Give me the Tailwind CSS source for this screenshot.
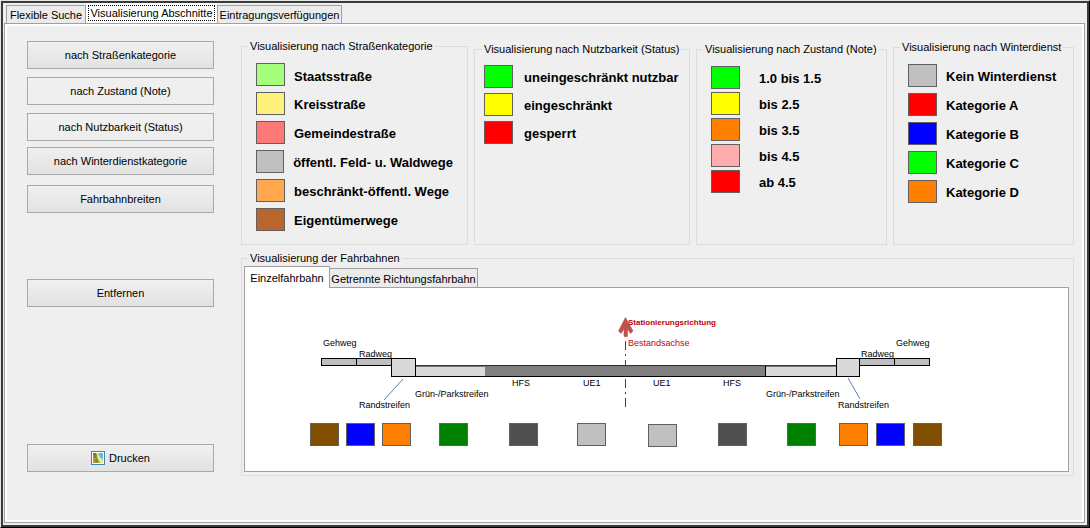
<!DOCTYPE html>
<html lang="de">
<head>
<meta charset="utf-8">
<title>Visualisierung Abschnitte</title>
<script src="https://cdn.jsdelivr.net/npm/@tailwindcss/browser@4"></script>
</head>
<body class="bg-[#d4d4d4] font-['Liberation_Sans',Arial,sans-serif] text-[11px] leading-4 text-black">
<div class="flex min-h-screen flex-col border-t border-l border-r border-b border-t-[#e4e4e4] border-l-[#e4e4e4] border-r-black border-b-black">
<div class="flex flex-1 flex-col border-2 border-[#3a3c3a] bg-[#efefef] pr-0.5 pb-0.5 pl-px">

  <div role="tablist" class="flex items-end">
    <button role="tab" class="mt-0.5 ml-0.5 h-[18px] w-20 border border-b-0 border-[#a0a0a0] bg-[#ebebeb] whitespace-nowrap">Flexible Suche</button>
    <button role="tab" aria-selected="true" class="h-5 w-[131px] bg-white p-0.5 whitespace-nowrap"><span class="block border border-dotted border-black leading-[14px]">Visualisierung Abschnitte</span></button>
    <button role="tab" class="mt-0.5 h-[18px] w-[125px] border border-b-0 border-[#a0a0a0] bg-[#ebebeb] whitespace-nowrap">Eintragungsverfügungen</button>
  </div>

  <main role="tabpanel" class="flex flex-1 gap-[27px] border border-[#a0a0a0] bg-[#efefef] pt-3.5 pr-2.5 pl-[22px] ring-2 ring-white ring-inset">
    <nav class="flex w-[187px] shrink-0 flex-col pt-[3px]" aria-label="Visualisierung">
      <button class="h-7 border border-[#a8a8a8] bg-linear-to-b from-[#f0f0f0] to-[#e2e2e2]">nach Straßenkategorie</button>
      <button class="mt-2 h-7 border border-[#a8a8a8] bg-linear-to-b from-[#f0f0f0] to-[#eeeeee]">nach Zustand (Note)</button>
      <button class="mt-2 h-7 border border-[#a8a8a8] bg-linear-to-b from-[#f0f0f0] to-[#eeeeee]">nach Nutzbarkeit (Status)</button>
      <button class="mt-1.5 h-7 border border-[#a8a8a8] bg-linear-to-b from-[#f0f0f0] to-[#e2e2e2]">nach Winterdienstkategorie</button>
      <button class="mt-2.5 h-7 border border-[#a8a8a8] bg-linear-to-b from-[#f0f0f0] to-[#e2e2e2]">Fahrbahnbreiten</button>
      <button class="mt-[66px] h-7 border border-[#a8a8a8] bg-linear-to-b from-[#f0f0f0] to-[#e2e2e2]">Entfernen</button>
      <button class="mt-[137px] flex h-7 items-center justify-center gap-1 border border-[#a8a8a8] bg-linear-to-b from-[#f0f0f0] to-[#e2e2e2]">
        <svg class="size-3.5" viewBox="0 0 14 14" aria-hidden="true">
          <rect x=".5" y=".5" width="13" height="13" fill="#fff" stroke="#3f86b5"/>
          <path d="M2 2h5l5 6v4H2z" fill="#8fae3c"/>
          <path d="M7 2h5v6L9 6z" fill="#62b7e6"/>
          <path d="M5 2l2 0 2 4 3 3v3H9L7 8z" fill="#f0e692"/>
          <path d="M2 2h3l1 3-2 2zM4 9l2-1 1 3H5z" fill="#4f8f2c"/>
          <path d="M3 5h1v2H3zM5 7h1v1H5zM3 9h1v1H3z" fill="#c56a2a"/>
        </svg>
        Drucken
      </button>
    </nav>

    <div class="flex min-w-0 flex-1 flex-col">
      <div class="grid grid-cols-[227fr_216fr_191fr_181fr] gap-x-1.5">
        <fieldset class="h-[207px] min-w-0 border border-[#dcdcdc] px-3.5">
          <legend class="-ml-2 px-0.5 whitespace-nowrap">Visualisierung nach Straßenkategorie</legend>
          <ul class="flex flex-col gap-1.5 pt-[9px] text-[13px] font-bold whitespace-nowrap">
            <li class="flex items-center gap-[9px]"><span class="h-[23px] w-[29px] border border-[#606060] bg-[#a4ff7c]"></span><span class="pt-1">Staatsstraße</span></li>
            <li class="flex items-center gap-[9px]"><span class="h-[23px] w-[29px] border border-[#606060] bg-[#fff07c]"></span><span class="pt-0.5">Kreisstraße</span></li>
            <li class="flex items-center gap-[9px]"><span class="h-[23px] w-[29px] border border-[#606060] bg-[#ff7878]"></span><span class="pt-0.5">Gemeindestraße</span></li>
            <li class="flex items-center gap-[9px]"><span class="h-[23px] w-[29px] border border-[#606060] bg-[#c0c0c0]"></span><span class="pt-0.5">öffentl. Feld- u. Waldwege</span></li>
            <li class="flex items-center gap-[9px]"><span class="h-[23px] w-[29px] border border-[#606060] bg-[#ffa850]"></span><span class="pt-0.5">beschränkt-öffentl. Wege</span></li>
            <li class="flex items-center gap-[9px]"><span class="h-[23px] w-[29px] border border-[#606060] bg-[#b9652c]"></span><span class="pt-0.5">Eigentümerwege</span></li>
          </ul>
        </fieldset>
        <fieldset class="mt-[3px] h-[204px] min-w-0 border border-[#dcdcdc] px-[9px]">
          <legend class="-ml-0.5 px-0.5 whitespace-nowrap">Visualisierung nach Nutzbarkeit (Status)</legend>
          <ul class="flex flex-col gap-[5px] pt-2 text-[13px] font-bold whitespace-nowrap">
            <li class="flex items-center gap-[11px]"><span class="h-[23px] w-[29px] border border-[#606060] bg-[#00ff00]"></span><span class="pt-0.5">uneingeschränkt nutzbar</span></li>
            <li class="flex items-center gap-[11px]"><span class="h-[23px] w-[29px] border border-[#606060] bg-[#ffff00]"></span><span class="pt-0.5">eingeschränkt</span></li>
            <li class="flex items-center gap-[11px]"><span class="h-[23px] w-[29px] border border-[#606060] bg-[#ff0000]"></span><span class="pt-0.5">gesperrt</span></li>
          </ul>
        </fieldset>
        <fieldset class="mt-[3px] h-[204px] min-w-0 border border-[#dcdcdc] px-3.5">
          <legend class="-ml-2 px-0.5 whitespace-nowrap">Visualisierung nach Zustand (Note)</legend>
          <ul class="flex flex-col gap-[3px] pt-[9px] text-[13px] font-bold whitespace-nowrap">
            <li class="flex items-center gap-[19px]"><span class="h-[23px] w-[29px] border border-[#606060] bg-[#00ff00]"></span><span class="pt-0.5">1.0 bis 1.5</span></li>
            <li class="flex items-center gap-[19px]"><span class="h-[23px] w-[29px] border border-[#606060] bg-[#ffff00]"></span><span class="pt-0.5">bis 2.5</span></li>
            <li class="flex items-center gap-[19px]"><span class="h-[23px] w-[29px] border border-[#606060] bg-[#ff8000]"></span><span class="pt-0.5">bis 3.5</span></li>
            <li class="flex items-center gap-[19px]"><span class="h-[23px] w-[29px] border border-[#606060] bg-[#ffacac]"></span><span class="pt-0.5">bis 4.5</span></li>
            <li class="flex items-center gap-[19px]"><span class="h-[23px] w-[29px] border border-[#606060] bg-[#ff0000]"></span><span class="pt-0.5">ab 4.5</span></li>
          </ul>
        </fieldset>
        <fieldset class="mt-px h-[206px] min-w-0 border border-[#dcdcdc] px-3.5">
          <legend class="-ml-2 px-0.5 whitespace-nowrap">Visualisierung nach Winterdienst</legend>
          <ul class="flex flex-col gap-1.5 pt-[9px] text-[13px] font-bold whitespace-nowrap">
            <li class="flex items-center gap-[9px]"><span class="h-[23px] w-[29px] border border-[#606060] bg-[#c0c0c0]"></span><span class="pt-0.5">Kein Winterdienst</span></li>
            <li class="flex items-center gap-[9px]"><span class="h-[23px] w-[29px] border border-[#606060] bg-[#ff0000]"></span><span class="pt-0.5">Kategorie A</span></li>
            <li class="flex items-center gap-[9px]"><span class="h-[23px] w-[29px] border border-[#606060] bg-[#0000ff]"></span><span class="pt-0.5">Kategorie B</span></li>
            <li class="flex items-center gap-[9px]"><span class="h-[23px] w-[29px] border border-[#606060] bg-[#00ff00]"></span><span class="pt-0.5">Kategorie C</span></li>
            <li class="flex items-center gap-[9px]"><span class="h-[23px] w-[29px] border border-[#606060] bg-[#ff8000]"></span><span class="pt-0.5">Kategorie D</span></li>
          </ul>
        </fieldset>
      </div>

      <fieldset class="mt-[5px] min-w-0 border border-[#dcdcdc] pr-1 pb-[3px] pl-0.5">
        <legend class="ml-1 px-0.5 whitespace-nowrap">Visualisierung der Fahrbahnen</legend>
        <div role="tablist" class="flex items-end">
          <button role="tab" aria-selected="true" class="z-10 -mb-px h-[22px] w-[86px] border border-b-0 border-[#a0a0a0] bg-white whitespace-nowrap">Einzelfahrbahn</button>
          <button role="tab" class="h-[19px] w-[148px] border border-b-0 border-l-0 border-[#a0a0a0] bg-[#ebebeb] pt-0.5 whitespace-nowrap">Getrennte Richtungsfahrbahn</button>
        </div>
        <div role="tabpanel" class="h-[185px] border border-[#a0a0a0] bg-white pl-[65px]">
          <svg class="h-[135px] w-[640px]" viewBox="310 288 640 135" font-size="9" role="img" aria-label="Querschnitt der Einzelfahrbahn">
            <g stroke="#000" shape-rendering="crispEdges">
              <rect x="321.500" y="358.500" width="35" height="7" fill="#bfbfbf"/>
              <rect x="356.500" y="358.500" width="35" height="7" fill="#bfbfbf"/>
              <rect x="859.500" y="358.500" width="35" height="7" fill="#bfbfbf"/>
              <rect x="894.500" y="358.500" width="35" height="7" fill="#bfbfbf"/>
            </g>
            <rect x="415" y="366" width="422" height="10" fill="#d9d9d9"/>
            <rect x="485" y="366" width="281" height="10" fill="#808080"/>
            <path d="M415 365.500H837" stroke="#333" stroke-width="1"/>
            <path d="M415 366.500H837" stroke="#777" stroke-width="1"/>
            <path d="M415 376.500H837M765.500 366V376" stroke="#000" stroke-width="1"/>
            <g fill="#d9d9d9" stroke="#000" shape-rendering="crispEdges">
              <rect x="391.500" y="358.500" width="24" height="18"/>
              <rect x="836.500" y="358.500" width="23" height="18"/>
            </g>
            <path d="M403 379L384 400M848 378L860 399" stroke="#5b84b8" fill="none"/>
            <path d="M625.500 341V365M625.500 379V408" stroke="#981b1e" stroke-dasharray="9 4 2 4" fill="none"/>
            <path d="M625.500 317.500L633 331L630.500 333.500L627.500 329V336.500H624V329L621 333.500L618.500 331Z" fill="#c0504d" stroke="#b04845" stroke-width=".5"/>
            <text x="323" y="346">Gehweg</text>
            <text x="359" y="357">Radweg</text>
            <text x="359" y="408">Randstreifen</text>
            <text x="415" y="397">Grün-/Parkstreifen</text>
            <text x="512" y="386">HFS</text>
            <text x="583" y="386">UE1</text>
            <text x="653" y="386">UE1</text>
            <text x="723" y="386">HFS</text>
            <text x="766" y="397">Grün-/Parkstreifen</text>
            <text x="838" y="408">Randstreifen</text>
            <text x="861" y="357">Radweg</text>
            <text x="896" y="346">Gehweg</text>
            <text x="628" y="325" fill="#c00000" font-size="8" font-weight="bold">Stationierungsrichtung</text>
            <text x="628" y="346" fill="#c00020">Bestandsachse</text>
          </svg>
          <div class="flex items-start">
            <span class="h-[23px] w-[29px] border border-[#606060] bg-[#805000]"></span>
            <span class="ml-[7px] h-[23px] w-[29px] border border-[#606060] bg-[#0000ff]"></span>
            <span class="ml-[7px] h-[23px] w-[29px] border border-[#606060] bg-[#ff8000]"></span>
            <span class="ml-7 h-[23px] w-[29px] border border-[#606060] bg-[#008000]"></span>
            <span class="ml-[41px] h-[23px] w-[29px] border border-[#606060] bg-[#505050]"></span>
            <span class="ml-[39px] h-[23px] w-[29px] border border-[#606060] bg-[#c0c0c0]"></span>
            <span class="mt-px ml-[42px] h-[23px] w-[29px] border border-[#606060] bg-[#c0c0c0]"></span>
            <span class="ml-[41px] h-[23px] w-[29px] border border-[#606060] bg-[#505050]"></span>
            <span class="ml-10 h-[23px] w-[29px] border border-[#606060] bg-[#008000]"></span>
            <span class="ml-[23px] h-[23px] w-[29px] border border-[#606060] bg-[#ff8000]"></span>
            <span class="ml-2 h-[23px] w-[29px] border border-[#606060] bg-[#0000ff]"></span>
            <span class="ml-2 h-[23px] w-[29px] border border-[#606060] bg-[#805000]"></span>
          </div>
        </div>
      </fieldset>
    </div>
  </main>
</div>
</div>
</body>
</html>
